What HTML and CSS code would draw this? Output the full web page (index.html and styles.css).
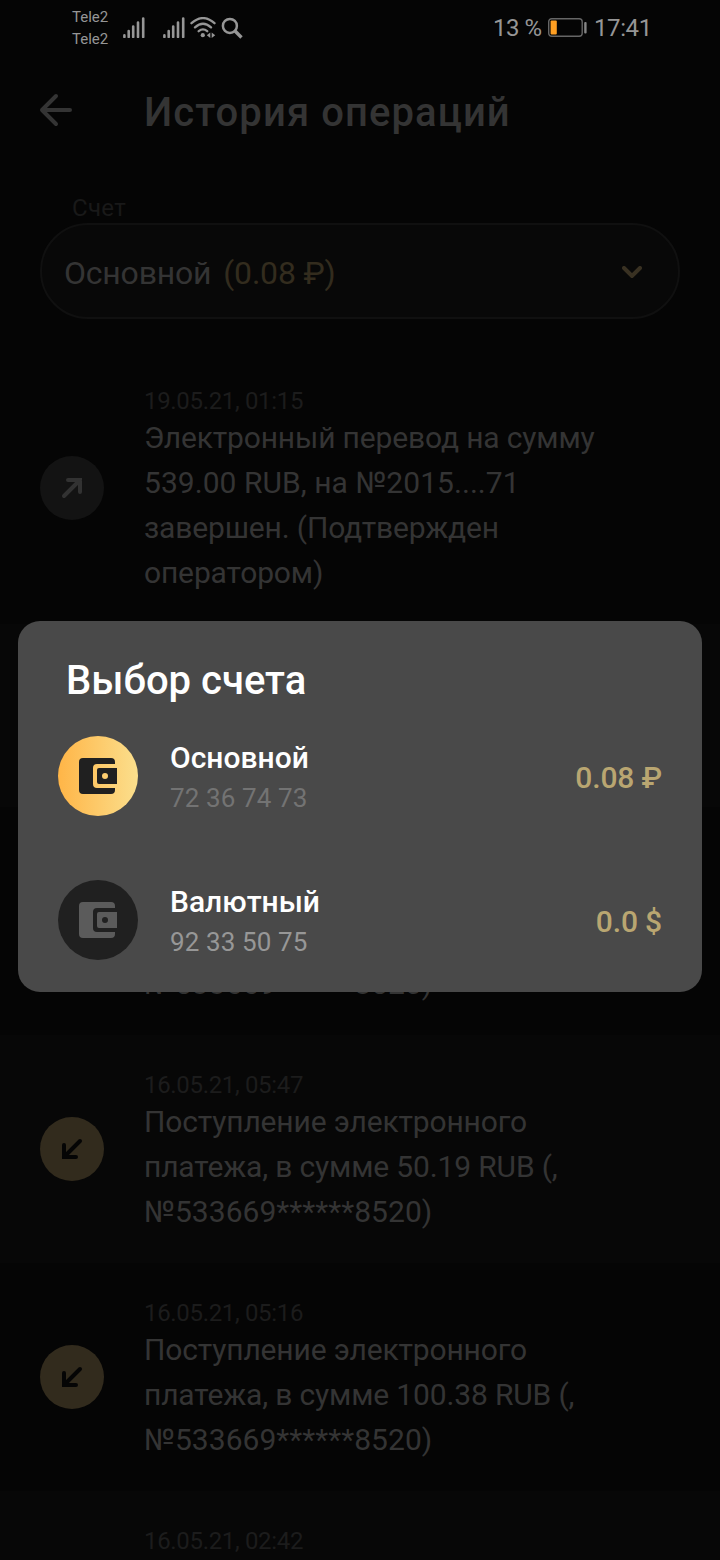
FILE: index.html
```html
<!DOCTYPE html>
<html lang="ru">
<head>
<meta charset="utf-8">
<title>История операций</title>
<link rel="stylesheet" href="styles.css">
</head>
<body>
<svg class="defs" width="0" height="0">
  <symbol id="signal" viewBox="0 0 22 21"><path d="M1.4 20v-1.6M5.7 20v-6M10.2 20v-10.5M15 20V5.500M20.200 20V1.500" fill="none" stroke="currentColor" stroke-width="2.6" stroke-linecap="round"/></symbol>
  <symbol id="out" viewBox="0 0 24 24"><path d="M4 20 20 4M8 4H20V16" fill="none" stroke="currentColor" stroke-width="4" stroke-linecap="round" stroke-linejoin="miter"/></symbol>
  <symbol id="in" viewBox="0 0 24 24"><path d="M20 4 4 20M4 8V20H16" fill="none" stroke="currentColor" stroke-width="4" stroke-linecap="round" stroke-linejoin="miter"/></symbol>
  <symbol id="wallet" viewBox="0 0 38 36"><path fill="currentColor" fill-rule="evenodd" d="M4 0H32Q36 0 36 4V6H18Q14 6 14 10V26Q14 30 18 30H36V32Q36 36 32 36H4Q0 36 0 32V4Q0 0 4 0ZM20 10H38V26H20Q18 26 18 24V12Q18 10 20 10ZM26 15A3 3 0 1 0 26 21A3 3 0 1 0 26 15Z"/></symbol>
</svg>
<div class="screen">
  <header class="status">
    <div class="carriers"><span>Tele2</span><span>Tele2</span></div>
    <svg class="signal" width="22" height="21"><use href="#signal"/></svg>
    <svg class="signal second" width="22" height="21"><use href="#signal"/></svg>
    <svg class="wifi" width="26" height="22" viewBox="0 0 26 22" fill="none" stroke="currentColor" stroke-width="2.300" stroke-linecap="round"><path d="M1.500 6.200Q13-4 24.500 6.200M5 10.400Q13 3.200 21 10.400M8.700 14.200Q13 10.600 17.200 14.200"/><circle cx="12.800" cy="18.200" r="2.100" fill="currentColor" stroke="none"/><path d="M20.300 15.500V21L16.800 18.200ZM21.700 15.500V21L25.200 18.200Z" fill="currentColor" stroke="none"/></svg>
    <svg class="search" width="22" height="22" viewBox="0 0 22 22" fill="none" stroke="currentColor"><circle cx="8.900" cy="8.900" r="7" stroke-width="2.500"/><path d="M13.800 13.800 20.500 20.500" stroke-width="3.400"/></svg>
    <span class="percent">13 %</span>
    <svg class="battery" width="40" height="20" viewBox="0 0 40 20"><rect x=".7" y=".7" width="33.500" height="17.600" rx="3" fill="none" stroke="#666" stroke-width="1.400"/><rect x="2.600" y="2.600" width="6.200" height="14" rx="1" fill="#ff9f22"/><rect x="36.200" y="4" width="2.400" height="11.500" rx="1" fill="#858585"/></svg>
    <span class="clock">17:41</span>
  </header>

  <div class="titlebar">
    <svg class="back" width="34" height="34" viewBox="0 0 34 34" fill="none" stroke="currentColor" stroke-width="4" stroke-linecap="round" stroke-linejoin="round"><path d="M31 17H3M17 3 3 17 17 31"/></svg>
    <h1>История операций</h1>
  </div>

  <div class="account">
    <div class="label">Счет</div>
    <div class="select">
      <span class="name">Основной</span><span class="sum">(0.08 ₽)</span>
      <svg class="chevron" width="20" height="12" viewBox="0 0 20 12" fill="none" stroke="currentColor" stroke-width="4" stroke-linecap="round"><path d="M2 2 10 10 18 2"/></svg>
    </div>
  </div>

  <main class="list">
    <article class="row">
      <div class="badge badge-out"><svg width="24" height="24"><use href="#out"/></svg></div>
      <div class="body"><time>19.05.21, 01:15</time><p>Электронный перевод на сумму<br><span class="card">539.00 RUB, на №2015....71</span><br>завершен. (Подтвержден<br>оператором)</p></div>
    </article>
    <article class="row alt">
      <div class="badge badge-out"></div>
      <div class="body"><time></time><p><br><br></p></div>
    </article>
    <article class="row">
      <div class="badge badge-in"></div>
      <div class="body"><time></time><p><br><br><span class="card">№533669******8520)</span></p></div>
    </article>
    <article class="row alt">
      <div class="badge badge-in"><svg width="24" height="24"><use href="#in"/></svg></div>
      <div class="body"><time>16.05.21, 05:47</time><p>Поступление электронного<br>платежа, в сумме 50.19 RUB (,<br><span class="card">№533669******8520)</span></p></div>
    </article>
    <article class="row">
      <div class="badge badge-in"><svg width="24" height="24"><use href="#in"/></svg></div>
      <div class="body"><time>16.05.21, 05:16</time><p>Поступление электронного<br>платежа, в сумме 100.38 RUB (,<br><span class="card">№533669******8520)</span></p></div>
    </article>
    <article class="row alt last">
      <div class="body"><time>16.05.21, 02:42</time></div>
    </article>
  </main>

  <section class="dialog">
    <h2>Выбор счета</h2>
    <div class="option">
      <div class="wallet gold"><svg width="38" height="36"><use href="#wallet"/></svg></div>
      <div class="info"><strong>Основной</strong><span>72 36 74 73</span></div>
      <div class="amount">0.08 ₽</div>
    </div>
    <div class="option">
      <div class="wallet dark"><svg width="38" height="36"><use href="#wallet"/></svg></div>
      <div class="info light"><strong>Валютный</strong><span>92 33 50 75</span></div>
      <div class="amount">0.0 $</div>
    </div>
  </section>
</div>
</body>
</html>
```
FILE: styles.css
```css
* { box-sizing: border-box; }
body { margin: 0; background: #050505; font-family: Roboto, "Noto Sans", sans-serif; }
h1, h2, p { margin: 0; font-weight: 500; }
svg { display: block; flex: none; }
.defs { position: absolute; }
.screen { position: relative; width: 720px; height: 1560px; overflow: hidden; background: #050505; }

.status { display: flex; height: 56px; padding-left: 72px; color: #969696; white-space: nowrap; }
.carriers { display: flex; flex-direction: column; width: 51px; padding-top: 6px; font-size: 15px; line-height: 22px; }
.signal { margin-top: 17px; }
.signal.second { margin-left: 18px; }
.wifi { margin: 17px 0 0 5px; }
.search { margin: 17px 0 0 5px; }
.percent { width: 54px; margin-left: 250px; font-size: 24px; line-height: 56px; letter-spacing: -.5px; }
.battery { margin: 18px 0 0 1px; }
.clock { margin-left: 6px; font-size: 24px; line-height: 56px; letter-spacing: -.4px; }

.titlebar { display: flex; align-items: center; height: 108px; padding: 0 39px; color: #343434; }
.titlebar h1 { margin-left: 71px; font-size: 40px; line-height: 48px; letter-spacing: 1.1px; padding-top: 6px; }

.account { padding: 28px 40px 0; height: 187px; }
.label { height: 31px; padding-left: 32px; font-size: 24px; line-height: 32px; letter-spacing: .3px; color: #191919; }
.select { display: flex; align-items: center; height: 96px; padding: 4px 36px 0 22px; border: 2px solid #101010; border-radius: 48px; background: #080808; font-size: 32px; letter-spacing: -.2px; color: #343434; }
.sum { margin-left: 12px; color: #332c1e; }
.chevron { margin: -3px 0 0 auto; color: #393122; }

.row { display: flex; align-items: center; padding: 28px 40px; background: #050505; }
.row.alt { background: #070707; }
.row.last { height: 120px; align-items: flex-start; padding-left: 144px; }
.badge { display: flex; align-items: center; justify-content: center; flex: none; width: 64px; height: 64px; margin-right: 40px; border-radius: 50%; }
.badge-out { background: #131313; color: #323232; }
.badge-in { background: #322b1d; color: #050505; }
.body { margin-top: -1px; padding-bottom: 1px; }
time { display: block; height: 37px; padding-top: 8px; font-size: 24px; line-height: 29px; letter-spacing: -.33px; color: #1c1c1c; }
.body time { line-height: 30px; }
.body p { font-size: 30px; font-weight: 400; line-height: 45px; letter-spacing: -.15px; color: #343434; white-space: nowrap; }
.body .card { letter-spacing: .05px; }

.dialog { position: absolute; left: 18px; top: 621px; width: 684px; height: 371px; padding: 35px 40px 0; border-radius: 22px; background: #494949; color: #fff; }
.dialog h2 { height: 80px; padding: 1px 0 0 8px; font-size: 40px; line-height: 48px; }
.option { display: flex; align-items: center; height: 80px; margin-bottom: 64px; }
.wallet { display: flex; align-items: center; width: 80px; height: 80px; padding-left: 21px; border-radius: 50%; }
.gold { background: linear-gradient(90deg, #ffb547, #fbdf8d); color: #202020; }
.dark { background: #202020; color: #5b5b5b; }
.info { display: flex; flex-direction: column; margin-left: 32px; }
.info strong { font-size: 30px; font-weight: 500; line-height: 44px; }
.info span { font-size: 26px; line-height: 36px; letter-spacing: .1px; color: #737373; }
.info.light span { color: #979797; }
.amount { margin-left: auto; padding-top: 2px; font-size: 30px; font-weight: 500; letter-spacing: -.15px; color: #b9a671; }
```
